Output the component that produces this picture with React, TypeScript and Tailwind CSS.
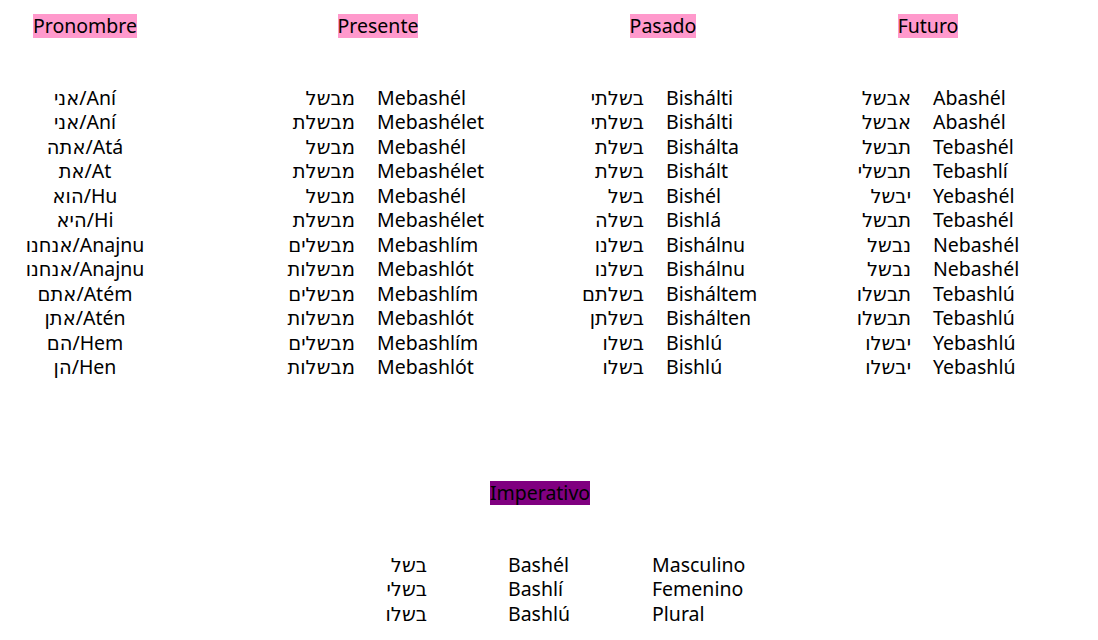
const ROWS = [
  { pron: "אני/Aní", preHe: "מבשל", pre: "Mebashél", pasHe: "בשלתי", pas: "Bishálti", futHe: "אבשל", fut: "Abashél" },
  { pron: "אני/Aní", preHe: "מבשלת", pre: "Mebashélet", pasHe: "בשלתי", pas: "Bishálti", futHe: "אבשל", fut: "Abashél" },
  { pron: "אתה/Atá", preHe: "מבשל", pre: "Mebashél", pasHe: "בשלת", pas: "Bishálta", futHe: "תבשל", fut: "Tebashél" },
  { pron: "את/At", preHe: "מבשלת", pre: "Mebashélet", pasHe: "בשלת", pas: "Bishált", futHe: "תבשלי", fut: "Tebashlí" },
  { pron: "הוא/Hu", preHe: "מבשל", pre: "Mebashél", pasHe: "בשל", pas: "Bishél", futHe: "יבשל", fut: "Yebashél" },
  { pron: "היא/Hi", preHe: "מבשלת", pre: "Mebashélet", pasHe: "בשלה", pas: "Bishlá", futHe: "תבשל", fut: "Tebashél" },
  { pron: "אנחנו/Anajnu", preHe: "מבשלים", pre: "Mebashlím", pasHe: "בשלנו", pas: "Bishálnu", futHe: "נבשל", fut: "Nebashél" },
  { pron: "אנחנו/Anajnu", preHe: "מבשלות", pre: "Mebashlót", pasHe: "בשלנו", pas: "Bishálnu", futHe: "נבשל", fut: "Nebashél" },
  { pron: "אתם/Atém", preHe: "מבשלים", pre: "Mebashlím", pasHe: "בשלתם", pas: "Bisháltem", futHe: "תבשלו", fut: "Tebashlú" },
  { pron: "אתן/Atén", preHe: "מבשלות", pre: "Mebashlót", pasHe: "בשלתן", pas: "Bishálten", futHe: "תבשלו", fut: "Tebashlú" },
  { pron: "הם/Hem", preHe: "מבשלים", pre: "Mebashlím", pasHe: "בשלו", pas: "Bishlú", futHe: "יבשלו", fut: "Yebashlú" },
  { pron: "הן/Hen", preHe: "מבשלות", pre: "Mebashlót", pasHe: "בשלו", pas: "Bishlú", futHe: "יבשלו", fut: "Yebashlú" },
];

const IMPERATIVE = [
  { he: "בשל", es: "Bashél", kind: "Masculino" },
  { he: "בשלי", es: "Bashlí", kind: "Femenino" },
  { he: "בשלו", es: "Bashlú", kind: "Plural" },
];

function Tag({ children, purple }: { children: React.ReactNode; purple?: boolean }) {
  return (
    <span className={"inline-block h-[24px] leading-[24px] " + (purple ? "bg-[#800080]" : "bg-[#ff99cc]")}>
      {children}
    </span>
  );
}

export default function App() {
  return (
    <div className="min-h-screen bg-white text-black text-[19.5px] leading-[24.45px] font-['Noto_Sans','DejaVu_Sans',sans-serif] pt-[14px] overflow-hidden">
      {/* tiempos */}
      <div className="flex h-[24px]">
        <div className="w-[140px] ml-[15px] text-center"><Tag>Pronombre</Tag></div>
        <div className="w-[140px] ml-[153px] text-center"><Tag>Presente</Tag></div>
        <div className="w-[140px] ml-[145px] text-center"><Tag>Pasado</Tag></div>
        <div className="w-[140px] ml-[125px] text-center"><Tag>Futuro</Tag></div>
      </div>

      <div className="mt-[48px] grid grid-cols-[170px_185px_215px_74px_196px_71px_1fr]">
        {ROWS.map((r, i) => (
          <div key={i} className="contents">
            <div className="text-center">{r.pron}</div>
            <div className="text-right">{r.preHe}</div>
            <div className="pl-[22px]">{r.pre}</div>
            <div className="text-right">{r.pasHe}</div>
            <div className="pl-[22px]">{r.pas}</div>
            <div className="text-right">{r.futHe}</div>
            <div className="pl-[22px]">{r.fut}</div>
          </div>
        ))}
      </div>

      {/* imperativo */}
      <div className="mt-[102px] flex h-[24px]">
        <div className="w-[160px] ml-[460px] text-center"><Tag purple>Imperativo</Tag></div>
      </div>

      <div className="mt-[47.5px] grid grid-cols-[427px_81px_144px_1fr]">
        {IMPERATIVE.map((r) => (
          <div key={r.es} className="contents">
            <div className="text-right">{r.he}</div>
            <div />
            <div>{r.es}</div>
            <div>{r.kind}</div>
          </div>
        ))}
      </div>
    </div>
  );
}
